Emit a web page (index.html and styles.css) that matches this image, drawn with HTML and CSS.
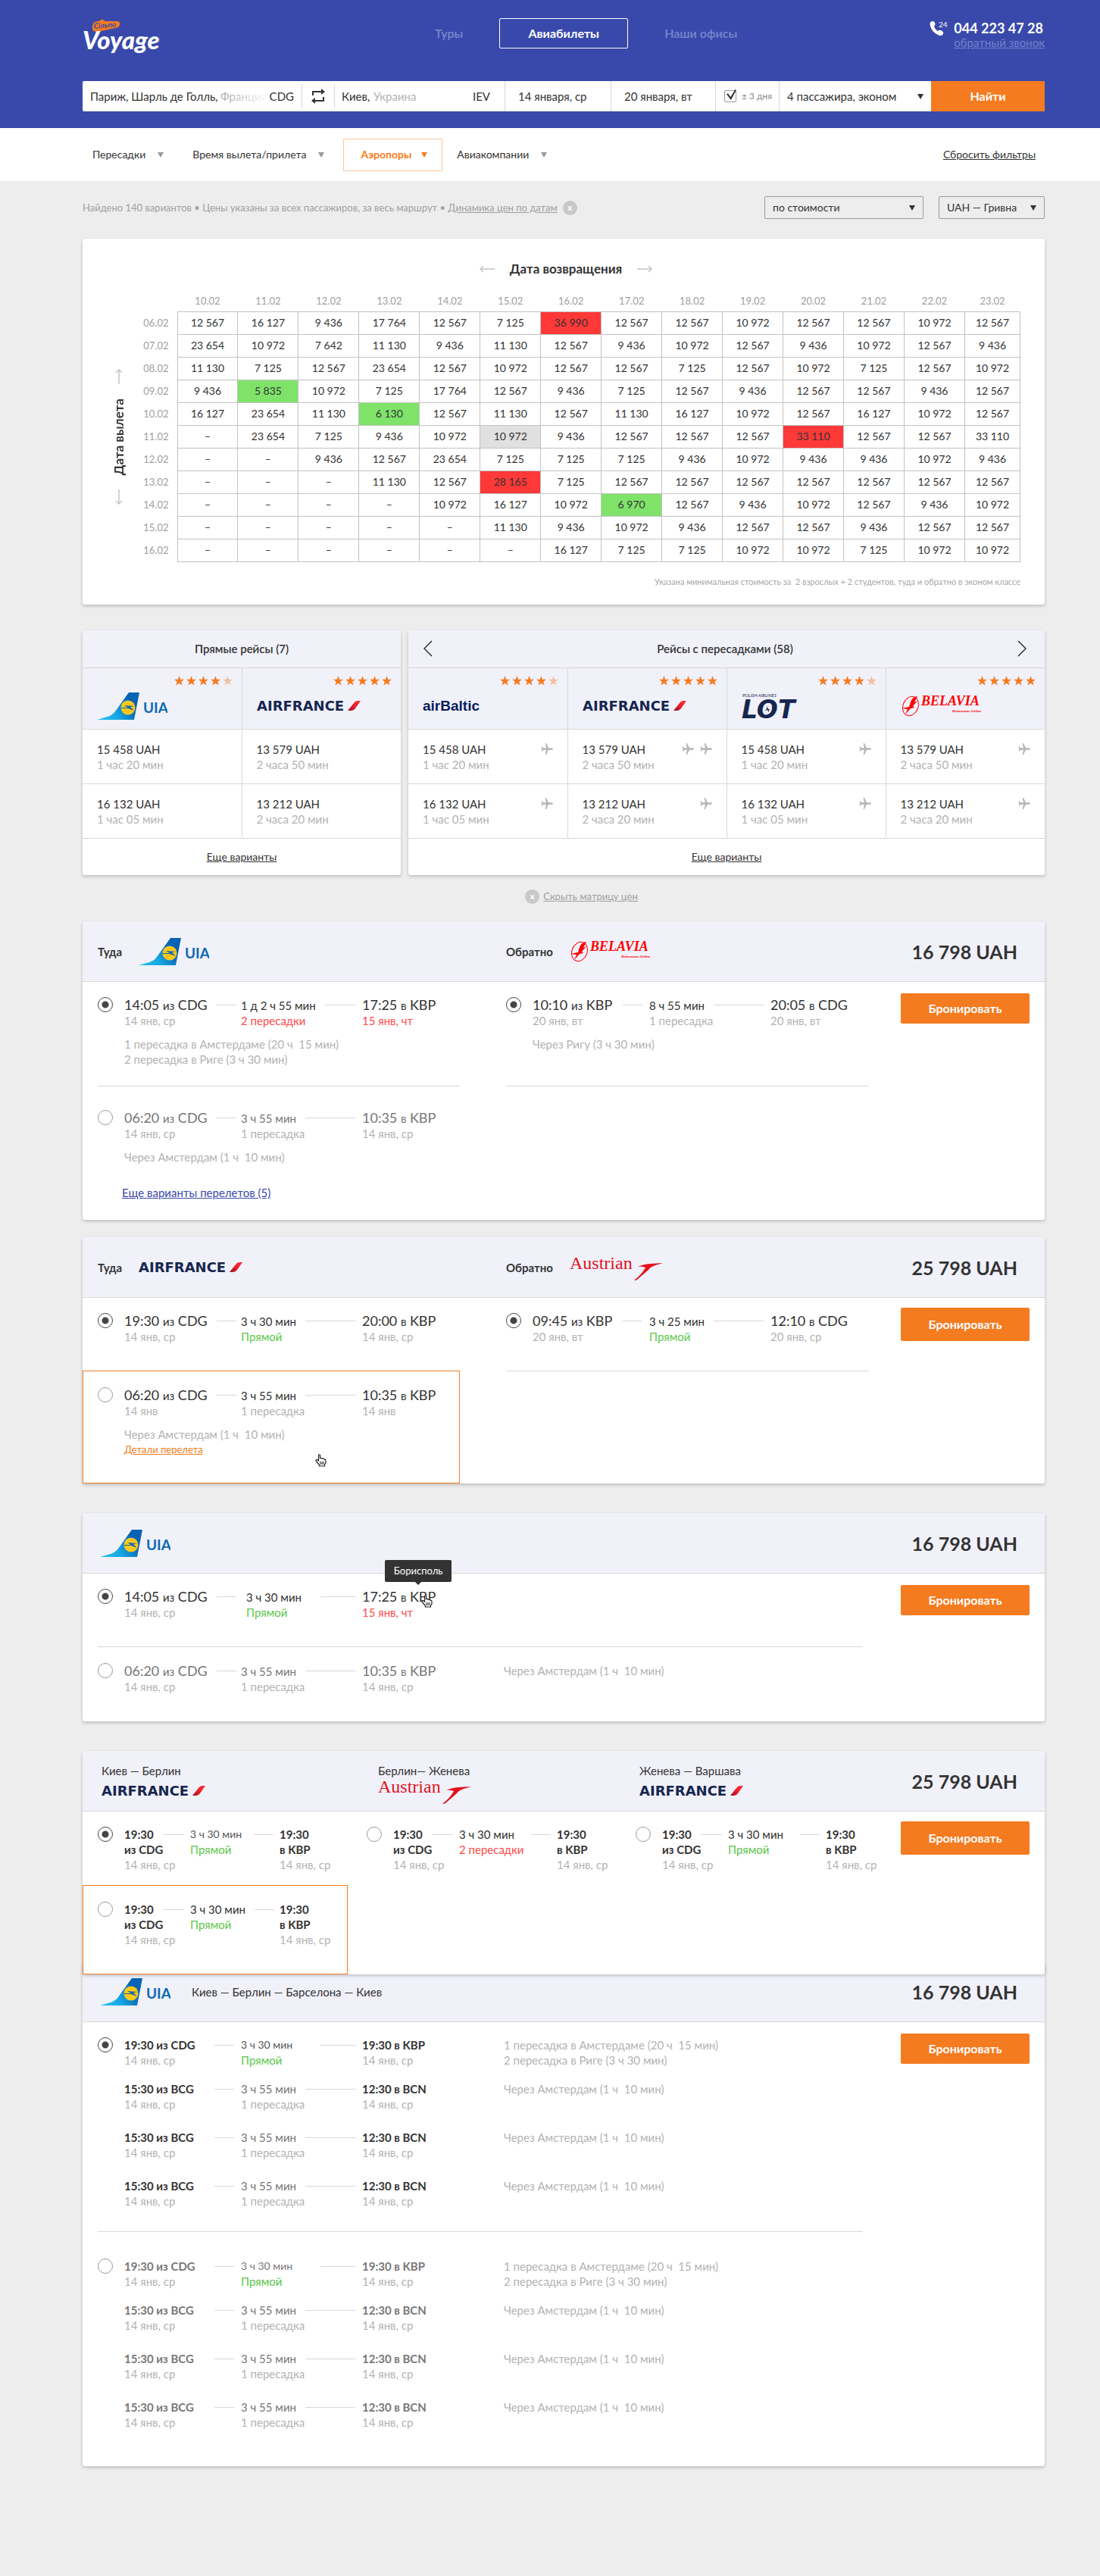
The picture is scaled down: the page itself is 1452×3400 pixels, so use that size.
FILE: index.html
```html
<!DOCTYPE html>
<html lang="ru">
<head>
<meta charset="utf-8">
<title>Voyage — Авиабилеты</title>
<meta name="viewport" content="width=device-width, initial-scale=1">
<link rel="stylesheet" href="styles.css">
</head>
<body>

<svg class="sprite" width="0" height="0" aria-hidden="true">
  <defs>
    <linearGradient id="tail" x1="0" y1="1" x2="1" y2="0.6">
      <stop offset="0" stop-color="#22c3f3"/><stop offset="0.45" stop-color="#18a8e4"/><stop offset="0.9" stop-color="#0863b4"/>
    </linearGradient>
    <linearGradient id="mark" x1="0" y1="1" x2="1" y2="0">
      <stop offset="0" stop-color="#8f1420"/><stop offset="0.5" stop-color="#ee2028"/><stop offset="1" stop-color="#f5333b"/>
    </linearGradient>
    <symbol id="uia" viewBox="0 0 93 36">
      <path d="M0 36C13 32 19 32 24 25L42 0H56L49 36Z" fill="url(#tail)"/>
      <circle cx="41" cy="20" r="9.500" fill="#fcc81a"/>
      <path d="M32 20h9l-5-3 14 1-6 1 5 5-8-3-9 0z" fill="#0a65b3"/>
      <text x="61" y="27" class="logo-uia">UIA</text>
    </symbol>
    <symbol id="airfrance" viewBox="0 0 137 14">
      <text x="0" y="13" class="logo-af">AIRFRANCE</text>
      <path d="M120 13L128 3Q130 0 133 0H137L130 10Q128 13 125 13Z" fill="url(#mark)"/>
    </symbol>
    <symbol id="airbaltic" viewBox="0 0 76 20">
      <text x="0" y="16" class="logo-bt">airBaltic</text>
    </symbol>
    <symbol id="lot" viewBox="0 0 76 34">
      <text x="1" y="5" class="logo-lot-sub">POLISH AIRLINES</text>
      <text x="0" y="33" class="logo-lot">LOT</text>
      <circle cx="34" cy="21" r="5.500" fill="#f1f1fa"/>
      <path d="M30 23l3-2 0-4 2 4 3 0-2 1 0 3-2-3z" fill="#16264f"/>
    </symbol>
    <symbol id="belavia" viewBox="0 0 106 28">
      <ellipse cx="13" cy="14" rx="10" ry="13" transform="rotate(22 13 14)" fill="none" stroke="#f00" stroke-width="1"/>
      <path d="M22 1C14 2 13 8 11 15L1 17l8 1-3 7 7-8 5-1-2-2 6-7-4 2z" fill="#f00"/>
      <text x="27" y="13" class="logo-bel">BELAVIA</text>
      <text x="68" y="22" class="logo-bel-sub">Belarusian Airlines</text>
    </symbol>
    <symbol id="austrian" viewBox="0 0 124 34">
      <text x="0" y="19" class="logo-os">Austrian</text>
      <path d="M90 16C100 11 112 12 123 11C114 14 107 15 104 20L89 33Q85 35 86 33C93 28 97 22 100 17Q95 15 90 16Z" fill="#e1131d"/>
    </symbol>
    <symbol id="star" viewBox="0 0 13 13">
      <path d="M6.500 0L8.200 4.700L13 4.800L9.200 7.800L10.600 12.600L6.500 9.800L2.400 12.600L3.800 7.800L0 4.800L4.800 4.700Z"/>
    </symbol>
    <symbol id="stars-5" viewBox="0 0 77 13">
      <g fill="#f57b20"><use href="#star" width="13" height="13"/><use href="#star" x="16" width="13" height="13"/><use href="#star" x="32" width="13" height="13"/><use href="#star" x="48" width="13" height="13"/><use href="#star" x="64" width="13" height="13"/></g>
    </symbol>
    <symbol id="stars-4" viewBox="0 0 77 13">
      <g fill="#f57b20"><use href="#star" width="13" height="13"/><use href="#star" x="16" width="13" height="13"/><use href="#star" x="32" width="13" height="13"/><use href="#star" x="48" width="13" height="13"/><use href="#star" x="64" width="13" height="13" opacity="0.4"/></g>
    </symbol>
    <symbol id="plane" viewBox="0 0 16 15">
      <path d="M16 7.500C16 8.400 15 8.700 14 8.700H10L7 15H5.600L6.900 8.700H3.200L1.800 10.500H.6L1.300 7.500.6 4.500H1.800L3.200 6.300H6.900L5.600 0H7L10 6.300H14C15 6.300 16 6.600 16 7.500Z" fill="#b5b5b5"/>
    </symbol>
    <symbol id="hand" viewBox="0 0 15 17">
      <path d="M4.500 1.500Q5.500 0 6.500 1.500V5.500Q8 5 8.500 6Q10 5.500 10.500 6.500Q12 6 12.500 7.500Q14 7 14 9V12L12.500 14V16H5.500V14.500L3 11.500L1 9Q1 7 2.500 7.500L4.500 9Z" fill="#fff" stroke="#222" stroke-width="1.200"/>
      <path d="M7 10v4M9 10v4M11 10v4" stroke="#222" stroke-width="1"/>
    </symbol>
    <symbol id="arrow-right" viewBox="0 0 20 10">
      <path d="M0 5H19M15 1L19 5L15 9" fill="none" stroke="#c4c4c4" stroke-width="1.500"/>
    </symbol>
    <symbol id="arrow-left" viewBox="0 0 20 10">
      <path d="M20 5H1M5 1L1 5L5 9" fill="none" stroke="#c4c4c4" stroke-width="1.500"/>
    </symbol>
  </defs>
</svg>

<header class="header">
  <div class="topbar">
    <a class="brand" href="#" aria-label="Voyage">
      <svg width="104" height="56" viewBox="0 0 104 56" aria-hidden="true">
        <path d="M13 10Q14 4 21 4L25 2Q28 1 29 4L45 4Q50 4 49 8Q49 12 43 13L20 18Q12 19 13 10Z" fill="#f57b20"/>
        <text x="15" y="14" class="brand-sub" transform="rotate(-5 15 14)">Сільпо</text>
        <text x="0" y="41" class="brand-name">Voyage</text>
      </svg>
    </a>
    <nav class="nav">
      <a class="nav-link" href="#">Туры</a>
      <a class="nav-link nav-link--active" href="#">Авиабилеты</a>
      <a class="nav-link" href="#">Наши офисы</a>
    </nav>
    <div class="contact">
      <svg width="26" height="20" viewBox="0 0 26 20" aria-hidden="true">
        <path d="M4 0Q7 0 7.500 4Q7 6 6 6.500Q7 10.500 11 13Q13 11 15 12Q19 14 18 17Q16 20 12 18.500Q2 14 0.500 4Q0.500 0 4 0Z" fill="#fff"/>
        <text x="12" y="8" class="contact-24">24</text>
      </svg>
      <div class="contact-text">
        <a class="contact-phone" href="tel:0442234728">044 223 47 28</a>
        <a class="contact-call" href="#">обратный звонок</a>
      </div>
    </div>
  </div>

  <form class="search">
    <div class="search-cell search-from">
      <input class="search-city" type="text" value="Париж, Шарль де Голль," aria-label="Откуда">
      <span class="search-country search-country--fade">Франция</span>
      <span class="search-code">CDG</span>
    </div>
    <button class="search-swap" type="button" aria-label="Поменять местами">
      <svg width="18" height="20" viewBox="0 0 18 20" aria-hidden="true"><path d="M2 9V4H15M16 11V16H3" fill="none" stroke="#333" stroke-width="2"/><path d="M13 0L18 4L13 8ZM5 12L0 16L5 20Z" fill="#333"/></svg>
    </button>
    <div class="search-cell search-to">
      <input class="search-city search-city--short" type="text" value="Киев," aria-label="Куда">
      <span class="search-country">Украина</span>
      <span class="search-code">IEV</span>
    </div>
    <input class="search-date" type="text" value="14 января, ср" aria-label="Дата вылета">
    <input class="search-date" type="text" value="20 января, вт" aria-label="Дата возвращения">
    <label class="search-flex"><input type="checkbox" class="check" checked> ± 3 дня</label>
    <div class="select search-pax">
      <select aria-label="Пассажиры"><option>4 пассажира, эконом</option></select>
    </div>
    <button class="search-go" type="submit">Найти</button>
  </form>
</header>

<div class="filters">
  <div class="filters-list">
    <button class="filter" type="button">Пересадки <i class="tri"></i></button>
    <button class="filter" type="button">Время вылета/прилета <i class="tri"></i></button>
    <button class="filter filter--active" type="button">Аэропоры <i class="tri"></i></button>
    <button class="filter" type="button">Авиакомпании <i class="tri"></i></button>
  </div>
  <a class="reset" href="#">Сбросить фильтры</a>
</div>

<main class="main">
  <div class="summary">
    <p class="summary-text">Найдено 140 вариантов • Цены указаны за всех пассажиров, за весь маршрут • <a href="#">Динамика цен по датам</a></p>
    <button class="close" type="button" aria-label="Закрыть">x</button>
    <div class="select select--box select--sort"><select aria-label="Сортировка"><option>по стоимости</option></select></div>
    <div class="select select--box select--currency"><select aria-label="Валюта"><option>UAH — Гривна</option></select></div>
  </div>

  <section class="card matrix">
    <h2 class="matrix-title">
      <svg width="20" height="10" aria-hidden="true"><use href="#arrow-left"/></svg>
      Дата возвращения
      <svg width="20" height="10" aria-hidden="true"><use href="#arrow-right"/></svg>
    </h2>
    <div class="matrix-body">
      <h3 class="matrix-side">
        <svg width="10" height="20" viewBox="0 0 10 20" aria-hidden="true"><path d="M5 20V1M1 5L5 1L9 5" fill="none" stroke="#c4c4c4" stroke-width="1.500"/></svg>
        <span>Дата вылета</span>
        <svg width="10" height="20" viewBox="0 0 10 20" aria-hidden="true"><path d="M5 0V19M1 15L5 19L9 15" fill="none" stroke="#c4c4c4" stroke-width="1.500"/></svg>
      </h3>
      <table class="prices">
        <colgroup><col class="col-date"><col span="13"><col class="col-last"></colgroup>
        <thead><tr><td></td><th>10.02</th><th>11.02</th><th>12.02</th><th>13.02</th><th>14.02</th><th>15.02</th><th>16.02</th><th>17.02</th><th>18.02</th><th>19.02</th><th>20.02</th><th>21.02</th><th>22.02</th><th>23.02</th></tr></thead>
        <tbody>
          <tr><th>06.02</th><td>12 567</td><td>16 127</td><td>9 436</td><td>17 764</td><td>12 567</td><td>7 125</td><td class="high">36 990</td><td>12 567</td><td>12 567</td><td>10 972</td><td>12 567</td><td>12 567</td><td>10 972</td><td>12 567</td></tr>
          <tr><th>07.02</th><td>23 654</td><td>10 972</td><td>7 642</td><td>11 130</td><td>9 436</td><td>11 130</td><td>12 567</td><td>9 436</td><td>10 972</td><td>12 567</td><td>9 436</td><td>10 972</td><td>12 567</td><td>9 436</td></tr>
          <tr><th>08.02</th><td>11 130</td><td>7 125</td><td>12 567</td><td>23 654</td><td>12 567</td><td>10 972</td><td>12 567</td><td>12 567</td><td>7 125</td><td>12 567</td><td>10 972</td><td>7 125</td><td>12 567</td><td>10 972</td></tr>
          <tr><th>09.02</th><td>9 436</td><td class="low">5 835</td><td>10 972</td><td>7 125</td><td>17 764</td><td>12 567</td><td>9 436</td><td>7 125</td><td>12 567</td><td>9 436</td><td>12 567</td><td>12 567</td><td>9 436</td><td>12 567</td></tr>
          <tr><th>10.02</th><td>16 127</td><td>23 654</td><td>11 130</td><td class="low">6 130</td><td>12 567</td><td>11 130</td><td>12 567</td><td>11 130</td><td>16 127</td><td>10 972</td><td>12 567</td><td>16 127</td><td>10 972</td><td>12 567</td></tr>
          <tr><th>11.02</th><td>–</td><td>23 654</td><td>7 125</td><td>9 436</td><td>10 972</td><td class="current">10 972</td><td>9 436</td><td>12 567</td><td>12 567</td><td>12 567</td><td class="high">33 110</td><td>12 567</td><td>12 567</td><td>33 110</td></tr>
          <tr><th>12.02</th><td>–</td><td>–</td><td>9 436</td><td>12 567</td><td>23 654</td><td>7 125</td><td>7 125</td><td>7 125</td><td>9 436</td><td>10 972</td><td>9 436</td><td>9 436</td><td>10 972</td><td>9 436</td></tr>
          <tr><th>13.02</th><td>–</td><td>–</td><td>–</td><td>11 130</td><td>12 567</td><td class="high">28 165</td><td>7 125</td><td>12 567</td><td>12 567</td><td>12 567</td><td>12 567</td><td>12 567</td><td>12 567</td><td>12 567</td></tr>
          <tr><th>14.02</th><td>–</td><td>–</td><td>–</td><td>–</td><td>10 972</td><td>16 127</td><td>10 972</td><td class="low">6 970</td><td>12 567</td><td>9 436</td><td>10 972</td><td>12 567</td><td>9 436</td><td>10 972</td></tr>
          <tr><th>15.02</th><td>–</td><td>–</td><td>–</td><td>–</td><td>–</td><td>11 130</td><td>9 436</td><td>10 972</td><td>9 436</td><td>12 567</td><td>12 567</td><td>9 436</td><td>12 567</td><td>12 567</td></tr>
          <tr><th>16.02</th><td>–</td><td>–</td><td>–</td><td>–</td><td>–</td><td>–</td><td>16 127</td><td>7 125</td><td>7 125</td><td>10 972</td><td>10 972</td><td>7 125</td><td>10 972</td><td>10 972</td></tr>
        </tbody>
      </table>
    </div>
    <p class="matrix-note">Указана минимальная стоимость за&nbsp; 2 взрослых + 2 студентов, туда и обратно в эконом классе</p>
  </section>

  <div class="airlines">
    <section class="card airlines-direct">
      <table class="offers">
        <thead>
          <tr class="offers-title"><th colspan="2">Прямые рейсы (7)</th></tr>
          <tr class="offers-logos">
            <th><div class="brandcell"><svg class="stars" width="77" height="13" role="img" aria-label="4 из 5"><use href="#stars-4"/></svg><span class="brandcell-logo"><svg width="93" height="36" role="img" aria-label="UIA"><use href="#uia"/></svg></span></div></th>
            <th><div class="brandcell"><svg class="stars" width="77" height="13" role="img" aria-label="5 из 5"><use href="#stars-5"/></svg><span class="brandcell-logo"><svg width="137" height="14" role="img" aria-label="Air France"><use href="#airfrance"/></svg></span></div></th>
          </tr>
        </thead>
        <tbody>
          <tr><td><div class="offer"><span>15 458 UAH</span></div><div class="offer-time">1 час 20 мин</div></td><td><div class="offer"><span>13 579 UAH</span></div><div class="offer-time">2 часа 50 мин</div></td></tr>
          <tr><td><div class="offer"><span>16 132 UAH</span></div><div class="offer-time">1 час 05 мин</div></td><td><div class="offer"><span>13 212 UAH</span></div><div class="offer-time">2 часа 20 мин</div></td></tr>
        </tbody>
      </table>
      <p class="offers-more"><a href="#">Еще варианты</a></p>
    </section>

    <section class="card airlines-stops">
      <table class="offers">
        <thead>
          <tr class="offers-title"><th colspan="4">
            <div class="pager">
              <button type="button" aria-label="Назад"><svg width="12" height="22" viewBox="0 0 12 22" aria-hidden="true"><path d="M11 1L1 11L11 21" fill="none" stroke="#333" stroke-width="1.500"/></svg></button>
              <span>Рейсы с пересадками (58)</span>
              <button type="button" aria-label="Вперед"><svg width="12" height="22" viewBox="0 0 12 22" aria-hidden="true"><path d="M1 1L11 11L1 21" fill="none" stroke="#333" stroke-width="1.500"/></svg></button>
            </div></th></tr>
          <tr class="offers-logos">
            <th><div class="brandcell"><svg class="stars" width="77" height="13" role="img" aria-label="4 из 5"><use href="#stars-4"/></svg><span class="brandcell-logo"><svg width="76" height="20" role="img" aria-label="airBaltic"><use href="#airbaltic"/></svg></span></div></th>
            <th><div class="brandcell"><svg class="stars" width="77" height="13" role="img" aria-label="5 из 5"><use href="#stars-5"/></svg><span class="brandcell-logo"><svg width="137" height="14" role="img" aria-label="Air France"><use href="#airfrance"/></svg></span></div></th>
            <th><div class="brandcell"><svg class="stars" width="77" height="13" role="img" aria-label="4 из 5"><use href="#stars-4"/></svg><span class="brandcell-logo"><svg width="76" height="34" role="img" aria-label="LOT"><use href="#lot"/></svg></span></div></th>
            <th><div class="brandcell"><svg class="stars" width="77" height="13" role="img" aria-label="5 из 5"><use href="#stars-5"/></svg><span class="brandcell-logo"><svg width="106" height="28" role="img" aria-label="Belavia"><use href="#belavia"/></svg></span></div></th>
          </tr>
        </thead>
        <tbody>
          <tr>
            <td><div class="offer"><span>15 458 UAH</span><svg width="16" height="15" aria-hidden="true"><use href="#plane"/></svg></div><div class="offer-time">1 час 20 мин</div></td>
            <td><div class="offer"><span>13 579 UAH</span><svg width="16" height="15" aria-hidden="true"><use href="#plane"/></svg><svg width="16" height="15" aria-hidden="true"><use href="#plane"/></svg></div><div class="offer-time">2 часа 50 мин</div></td>
            <td><div class="offer"><span>15 458 UAH</span><svg width="16" height="15" aria-hidden="true"><use href="#plane"/></svg></div><div class="offer-time">1 час 20 мин</div></td>
            <td><div class="offer"><span>13 579 UAH</span><svg width="16" height="15" aria-hidden="true"><use href="#plane"/></svg></div><div class="offer-time">2 часа 50 мин</div></td>
          </tr>
          <tr>
            <td><div class="offer"><span>16 132 UAH</span><svg width="16" height="15" aria-hidden="true"><use href="#plane"/></svg></div><div class="offer-time">1 час 05 мин</div></td>
            <td><div class="offer"><span>13 212 UAH</span><svg width="16" height="15" aria-hidden="true"><use href="#plane"/></svg></div><div class="offer-time">2 часа 20 мин</div></td>
            <td><div class="offer"><span>16 132 UAH</span><svg width="16" height="15" aria-hidden="true"><use href="#plane"/></svg></div><div class="offer-time">1 час 05 мин</div></td>
            <td><div class="offer"><span>13 212 UAH</span><svg width="16" height="15" aria-hidden="true"><use href="#plane"/></svg></div><div class="offer-time">2 часа 20 мин</div></td>
          </tr>
        </tbody>
      </table>
      <p class="offers-more"><a href="#">Еще варианты</a></p>
    </section>
  </div>

  <p class="hide-matrix"><button class="close" type="button" aria-label="Скрыть">x</button><a href="#">Скрыть матрицу цен</a></p>

  <!-- Туда и обратно, UIA + Belavia -->
  <article class="card trip">
    <header class="trip-head">
      <div class="trip-way">Туда <svg width="93" height="36" role="img" aria-label="UIA"><use href="#uia"/></svg></div>
      <div class="trip-way">Обратно <svg width="106" height="28" role="img" aria-label="Belavia"><use href="#belavia"/></svg></div>
      <div class="trip-price">16 798 UAH</div>
    </header>
    <div class="trip-body">
      <div class="trip-col">
        <div class="option">
          <label class="leg">
            <input type="radio" class="radio" name="a-out" checked>
            <span class="cell"><span class="cell-top"><span class="time">14:05 <small>из</small> CDG</span><i class="dash dash--first"></i></span><span class="date">14 янв, ср</span></span>
            <span class="cell"><span class="cell-top"><span class="dur">1 д 2 ч 55 мин</span><i class="dash"></i></span><span class="red">2 пересадки</span></span>
            <span class="cell"><span class="cell-top"><span class="time">17:25 <small>в</small> KBP</span></span><span class="red">15 янв, чт</span></span>
          </label>
          <p class="stops">1 пересадка в Амстердаме (20 ч&nbsp; 15 мин)<br>2 пересадка в Риге (3 ч 30 мин)</p>
        </div>
        <div class="option option--next option--muted">
          <label class="leg">
            <input type="radio" class="radio" name="a-out">
            <span class="cell"><span class="cell-top"><span class="time">06:20 <small>из</small> CDG</span><i class="dash dash--first"></i></span><span class="date">14 янв, ср</span></span>
            <span class="cell"><span class="cell-top"><span class="dur">3 ч 55 мин</span><i class="dash"></i></span><span class="date">1 пересадка</span></span>
            <span class="cell"><span class="cell-top"><span class="time">10:35 <small>в</small> KBP</span></span><span class="date">14 янв, ср</span></span>
          </label>
          <p class="stops">Через Амстердам (1 ч&nbsp; 10 мин)</p>
          <a class="more-flights" href="#">Еще варианты перелетов (5)</a>
        </div>
      </div>
      <div class="trip-col">
        <div class="option option--deep">
          <label class="leg">
            <input type="radio" class="radio" name="a-back" checked>
            <span class="cell"><span class="cell-top"><span class="time">10:10 <small>из</small> KBP</span><i class="dash dash--first"></i></span><span class="date">20 янв, вт</span></span>
            <span class="cell"><span class="cell-top"><span class="dur">8 ч 55 мин</span><i class="dash"></i></span><span class="date">1 пересадка</span></span>
            <span class="cell"><span class="cell-top"><span class="time">20:05 <small>в</small> CDG</span></span><span class="date">20 янв, вт</span></span>
          </label>
          <p class="stops">Через Ригу (3 ч 30 мин)</p>
        </div>
      </div>
      <div class="trip-book"><button class="book" type="button">Бронировать</button></div>
    </div>
  </article>

  <!-- Туда и обратно, Air France + Austrian -->
  <article class="card trip trip--near">
    <header class="trip-head">
      <div class="trip-way">Туда <svg width="137" height="14" role="img" aria-label="Air France"><use href="#airfrance"/></svg></div>
      <div class="trip-way">Обратно <svg width="124" height="34" role="img" aria-label="Austrian"><use href="#austrian"/></svg></div>
      <div class="trip-price">25 798 UAH</div>
    </header>
    <div class="trip-body">
      <div class="trip-col">
        <div class="option option--short option--open">
          <label class="leg">
            <input type="radio" class="radio" name="b-out" checked>
            <span class="cell"><span class="cell-top"><span class="time">19:30 <small>из</small> CDG</span><i class="dash dash--first"></i></span><span class="date">14 янв, ср</span></span>
            <span class="cell"><span class="cell-top"><span class="dur">3 ч 30 мин</span><i class="dash"></i></span><span class="green">Прямой</span></span>
            <span class="cell"><span class="cell-top"><span class="time">20:00 <small>в</small> KBP</span></span><span class="date">14 янв, ср</span></span>
          </label>
        </div>
        <div class="option option--hover">
          <label class="leg">
            <input type="radio" class="radio" name="b-out">
            <span class="cell"><span class="cell-top"><span class="time">06:20 <small>из</small> CDG</span><i class="dash dash--first"></i></span><span class="date">14 янв</span></span>
            <span class="cell"><span class="cell-top"><span class="dur">3 ч 55 мин</span><i class="dash"></i></span><span class="date">1 пересадка</span></span>
            <span class="cell"><span class="cell-top"><span class="time">10:35 <small>в</small> KBP</span></span><span class="date">14 янв</span></span>
          </label>
          <p class="stops">Через Амстердам (1 ч&nbsp; 10 мин)</p>
          <a class="details" href="#">Детали перелета</a>
          <svg class="pointer pointer--option" width="15" height="17" aria-hidden="true"><use href="#hand"/></svg>
        </div>
      </div>
      <div class="trip-col">
        <div class="option option--short">
          <label class="leg">
            <input type="radio" class="radio" name="b-back" checked>
            <span class="cell"><span class="cell-top"><span class="time">09:45 <small>из</small> KBP</span><i class="dash dash--first"></i></span><span class="date">20 янв, вт</span></span>
            <span class="cell"><span class="cell-top"><span class="dur">3 ч 25 мин</span><i class="dash"></i></span><span class="green">Прямой</span></span>
            <span class="cell"><span class="cell-top"><span class="time">12:10 <small>в</small> CDG</span></span><span class="date">20 янв, ср</span></span>
          </label>
        </div>
      </div>
      <div class="trip-book"><button class="book book--tall" type="button">Бронировать</button></div>
    </div>
  </article>

  <!-- В одну сторону -->
  <article class="card trip trip--wide">
    <header class="trip-head">
      <div class="trip-way trip-way--logo"><svg width="93" height="36" role="img" aria-label="UIA"><use href="#uia"/></svg></div>
      <div class="trip-price">16 798 UAH</div>
    </header>
    <div class="trip-body">
      <div class="trip-col">
        <div class="option option--short">
          <label class="leg leg--note">
            <input type="radio" class="radio" name="c-out" checked>
            <span class="cell"><span class="cell-top"><span class="time">14:05 <small>из</small> CDG</span><i class="dash dash--first"></i></span><span class="date">14 янв, ср</span></span>
            <span class="cell cell--shift"><span class="cell-top"><span class="dur">3 ч 30 мин</span><i class="dash dash--last"></i></span><span class="green">Прямой</span></span>
            <span class="cell"><span class="cell-top"><span class="time">17:25 <small>в</small> <span class="airport">KBP<span class="tooltip">Борисполь</span><svg class="pointer pointer--airport" width="15" height="17" aria-hidden="true"><use href="#hand"/></svg></span></span></span><span class="red">15 янв, чт</span></span>
          </label>
        </div>
        <div class="option option--second option--muted">
          <label class="leg leg--note">
            <input type="radio" class="radio" name="c-out">
            <span class="cell"><span class="cell-top"><span class="time">06:20 <small>из</small> CDG</span><i class="dash dash--first"></i></span><span class="date">14 янв, ср</span></span>
            <span class="cell"><span class="cell-top"><span class="dur">3 ч 55 мин</span><i class="dash"></i></span><span class="date">1 пересадка</span></span>
            <span class="cell"><span class="cell-top"><span class="time">10:35 <small>в</small> KBP</span></span><span class="date">14 янв, ср</span></span>
            <span class="note">Через Амстердам (1 ч&nbsp; 10 мин)</span>
          </label>
        </div>
      </div>
      <div class="trip-book"><button class="book" type="button">Бронировать</button></div>
    </div>
  </article>

  <!-- Три перелета -->
  <article class="card trip trip--triple">
    <header class="trip-head">
      <div class="trip-route">Киев — Берлин<svg width="137" height="14" role="img" aria-label="Air France"><use href="#airfrance"/></svg></div>
      <div class="trip-route">Берлин— Женева<svg width="124" height="34" role="img" aria-label="Austrian"><use href="#austrian"/></svg></div>
      <div class="trip-route">Женева — Варшава<svg width="137" height="14" role="img" aria-label="Air France"><use href="#airfrance"/></svg></div>
      <div class="trip-price">25 798 UAH</div>
    </header>
    <div class="trip-body">
      <div class="trip-col">
        <div class="option">
          <label class="leg leg--stack leg--tight">
            <input type="radio" class="radio" name="d-1" checked>
            <span class="cell"><span class="cell-top"><b>19:30</b><i class="dash dash--stack"></i></span><b>из CDG</b><span class="date">14 янв, ср</span></span>
            <span class="cell"><span class="cell-top"><span class="dur dur--light">3 ч 30 мин</span><i class="dash dash--first"></i></span><span class="green">Прямой</span></span>
            <span class="cell"><b>19:30</b><b>в KBP</b><span class="date">14 янв, ср</span></span>
          </label>
        </div>
        <div class="option option--hover">
          <label class="leg leg--stack leg--tight">
            <input type="radio" class="radio" name="d-1">
            <span class="cell"><span class="cell-top"><b>19:30</b><i class="dash dash--stack"></i></span><b>из CDG</b><span class="date">14 янв, ср</span></span>
            <span class="cell"><span class="cell-top"><span class="dur">3 ч 30 мин</span><i class="dash dash--first"></i></span><span class="green">Прямой</span></span>
            <span class="cell"><b>19:30</b><b>в KBP</b><span class="date">14 янв, ср</span></span>
          </label>
        </div>
      </div>
      <div class="trip-col">
        <div class="option">
          <label class="leg leg--stack">
            <input type="radio" class="radio" name="d-2">
            <span class="cell"><span class="cell-top"><b>19:30</b><i class="dash dash--stack"></i></span><b>из CDG</b><span class="date">14 янв, ср</span></span>
            <span class="cell"><span class="cell-top"><span class="dur">3 ч 30 мин</span><i class="dash dash--first"></i></span><span class="red">2 пересадки</span></span>
            <span class="cell"><b>19:30</b><b>в KBP</b><span class="date">14 янв, ср</span></span>
          </label>
        </div>
      </div>
      <div class="trip-col">
        <div class="option">
          <label class="leg leg--stack">
            <input type="radio" class="radio" name="d-3">
            <span class="cell"><span class="cell-top"><b>19:30</b><i class="dash dash--stack"></i></span><b>из CDG</b><span class="date">14 янв, ср</span></span>
            <span class="cell"><span class="cell-top"><span class="dur">3 ч 30 мин</span><i class="dash dash--first"></i></span><span class="green">Прямой</span></span>
            <span class="cell"><b>19:30</b><b>в KBP</b><span class="date">14 янв, ср</span></span>
          </label>
        </div>
      </div>
      <div class="trip-book"><button class="book book--tall" type="button">Бронировать</button></div>
    </div>
  </article>

  <!-- Сложный маршрут -->
  <article class="card trip trip--wide trip--tucked">
    <header class="trip-head">
      <div class="trip-way trip-way--logo"><svg width="93" height="36" role="img" aria-label="UIA"><use href="#uia"/></svg> <span class="trip-path">Киев — Берлин — Барселона — Киев</span></div>
      <div class="trip-price">16 798 UAH</div>
    </header>
    <div class="trip-body">
      <div class="trip-col">
        <div class="option option--multi">
          <label class="leg leg--note">
            <input type="radio" class="radio" name="e-1" checked>
            <span class="cell"><span class="cell-top"><b>19:30 из CDG</b><i class="dash dash--first"></i></span><span class="date">14 янв, ср</span></span>
            <span class="cell"><span class="cell-top"><span class="dur dur--light">3 ч 30 мин</span><i class="dash dash--last"></i></span><span class="green">Прямой</span></span>
            <span class="cell"><span class="cell-top"><b>19:30 в KBP</b></span><span class="date">14 янв, ср</span></span>
            <span class="note">1 пересадка в Амстердаме (20 ч&nbsp; 15 мин)<br>2 пересадка в Риге (3 ч 30 мин)</span>
          </label>
          <div class="leg leg--note">
            <span class="cell cell--indent"><span class="cell-top"><b>15:30 из BCG</b><i class="dash dash--first"></i></span><span class="date">14 янв, ср</span></span>
            <span class="cell"><span class="cell-top"><span class="dur dur--soft">3 ч 55 мин</span><i class="dash"></i></span><span class="date">1 пересадка</span></span>
            <span class="cell"><span class="cell-top"><b>12:30 в BCN</b></span><span class="date">14 янв, ср</span></span>
            <span class="note">Через Амстердам (1 ч&nbsp; 10 мин)</span>
          </div>
          <div class="leg leg--note">
            <span class="cell cell--indent"><span class="cell-top"><b>15:30 из BCG</b><i class="dash dash--first"></i></span><span class="date">14 янв, ср</span></span>
            <span class="cell"><span class="cell-top"><span class="dur dur--soft">3 ч 55 мин</span><i class="dash"></i></span><span class="date">1 пересадка</span></span>
            <span class="cell"><span class="cell-top"><b>12:30 в BCN</b></span><span class="date">14 янв, ср</span></span>
            <span class="note">Через Амстердам (1 ч&nbsp; 10 мин)</span>
          </div>
          <div class="leg leg--note">
            <span class="cell cell--indent"><span class="cell-top"><b>15:30 из BCG</b><i class="dash dash--first"></i></span><span class="date">14 янв, ср</span></span>
            <span class="cell"><span class="cell-top"><span class="dur dur--soft">3 ч 55 мин</span><i class="dash"></i></span><span class="date">1 пересадка</span></span>
            <span class="cell"><span class="cell-top"><b>12:30 в BCN</b></span><span class="date">14 янв, ср</span></span>
            <span class="note">Через Амстердам (1 ч&nbsp; 10 мин)</span>
          </div>
        </div>
        <div class="option option--multi option--muted">
          <label class="leg leg--note">
            <input type="radio" class="radio" name="e-1">
            <span class="cell"><span class="cell-top"><b>19:30 из CDG</b><i class="dash dash--first"></i></span><span class="date">14 янв, ср</span></span>
            <span class="cell"><span class="cell-top"><span class="dur dur--light">3 ч 30 мин</span><i class="dash dash--last"></i></span><span class="green">Прямой</span></span>
            <span class="cell"><span class="cell-top"><b>19:30 в KBP</b></span><span class="date">14 янв, ср</span></span>
            <span class="note">1 пересадка в Амстердаме (20 ч&nbsp; 15 мин)<br>2 пересадка в Риге (3 ч 30 мин)</span>
          </label>
          <div class="leg leg--note">
            <span class="cell cell--indent"><span class="cell-top"><b>15:30 из BCG</b><i class="dash dash--first"></i></span><span class="date">14 янв, ср</span></span>
            <span class="cell"><span class="cell-top"><span class="dur">3 ч 55 мин</span><i class="dash"></i></span><span class="date">1 пересадка</span></span>
            <span class="cell"><span class="cell-top"><b>12:30 в BCN</b></span><span class="date">14 янв, ср</span></span>
            <span class="note">Через Амстердам (1 ч&nbsp; 10 мин)</span>
          </div>
          <div class="leg leg--note">
            <span class="cell cell--indent"><span class="cell-top"><b>15:30 из BCG</b><i class="dash dash--first"></i></span><span class="date">14 янв, ср</span></span>
            <span class="cell"><span class="cell-top"><span class="dur">3 ч 55 мин</span><i class="dash"></i></span><span class="date">1 пересадка</span></span>
            <span class="cell"><span class="cell-top"><b>12:30 в BCN</b></span><span class="date">14 янв, ср</span></span>
            <span class="note">Через Амстердам (1 ч&nbsp; 10 мин)</span>
          </div>
          <div class="leg leg--note">
            <span class="cell cell--indent"><span class="cell-top"><b>15:30 из BCG</b><i class="dash dash--first"></i></span><span class="date">14 янв, ср</span></span>
            <span class="cell"><span class="cell-top"><span class="dur">3 ч 55 мин</span><i class="dash"></i></span><span class="date">1 пересадка</span></span>
            <span class="cell"><span class="cell-top"><b>12:30 в BCN</b></span><span class="date">14 янв, ср</span></span>
            <span class="note">Через Амстердам (1 ч&nbsp; 10 мин)</span>
          </div>
        </div>
      </div>
      <div class="trip-book"><button class="book" type="button">Бронировать</button></div>
    </div>
  </article>
</main>
</body>
</html>
```
FILE: styles.css
```css
:root {
  --blue: #3949ab;
  --orange: #f57b20;
  --ink: #333;
  --grey: #b3b3b3;
  --line: #d8d8d8;
  --tint: #f1f1fa;
  --left: 109px;
  --right: 73px;
}

* { box-sizing: border-box; }

body {
  margin: 0;
  min-height: 100vh;
  background: #ededed;
  color: var(--ink);
  font: 15px/20px Lato, "Noto Sans", sans-serif;
}

h2, h3, p { margin: 0; }
button, input, select { font: inherit; color: inherit; }
button { border: 0; padding: 0; background: none; }
svg { display: block; flex: none; }
.sprite { position: absolute; }

/* logo lettering */
.logo-uia { font: 700 19px Lato, sans-serif; fill: #0a6ab6; }
.logo-af { font: 700 18px "DejaVu Sans", sans-serif; fill: #16264f; }
.logo-bt { font: 700 19px "Liberation Sans", sans-serif; fill: #051c5c; }
.logo-lot { font: italic 700 33px "DejaVu Sans", sans-serif; fill: #16264f; }
.logo-lot-sub { font: italic 400 6px Lato, sans-serif; fill: #16264f; }
.logo-bel { font: italic 700 18px "Liberation Serif", serif; fill: #f00; }
.logo-bel-sub { font: italic 700 5px "Liberation Serif", serif; fill: #f00; }
.logo-os { font: 400 24px "Liberation Serif", serif; fill: #e1131d; }

/* header */
.header {
  padding: 24px var(--right) 22px var(--left);
  background: var(--blue);
}
.topbar {
  display: grid;
  grid-template-columns: 465px 1fr auto;
  align-items: start;
  height: 83px;
}
.brand { display: block; }
.brand-name { font: italic 900 33px Lato, sans-serif; fill: #fff; }
.brand-sub { font: italic 700 10px Lato, sans-serif; fill: var(--blue); }
.nav { display: flex; gap: 48px; line-height: 40px; font-size: 16px; font-weight: 600; }
.nav-link { color: #7c87cf; text-decoration: none; }
.nav-link--active {
  width: 170px;
  border: 1px solid #fff;
  border-radius: 2px;
  line-height: 38px;
  text-align: center;
  color: #fff;
  font-weight: 700;
}
.contact { display: flex; gap: 6px; padding-top: 4px; }
.contact-24 { font: 10px Lato, sans-serif; fill: #fff; }
.contact-text { display: grid; }
.contact-phone { color: #fff; font-size: 18px; line-height: 18px; font-weight: 700; text-decoration: none; }
.contact-call { color: #7480cc; font-size: 15px; }

.search {
  display: grid;
  grid-template-columns: minmax(0, 289fr) 44px minmax(0, 225fr) minmax(0, 140fr) minmax(0, 138fr) 84px minmax(0, 200fr) 150px;
  height: 40px;
  background: #fff;
  border-radius: 2px;
  overflow: hidden;
  font-size: 15px;
}
.search input, .search select { border: 0; background: none; outline: 0; padding: 0; min-width: 0; }
.search-cell { display: flex; align-items: center; }
.search-from { padding: 0 10px; }
.search-to { padding: 0 19px 0 9px; border-right: 1px solid var(--line); }
.search-city { width: 172px; }
.search-city--short { width: 42px; }
.search-country { flex: 1; overflow: hidden; color: var(--grey); }
.search-country--fade { mask-image: linear-gradient(to right, #000 20%, transparent); }
.search-swap {
  display: grid;
  place-items: center;
  margin: 4px 0;
  border: solid var(--line);
  border-width: 0 1px;
}
.search .search-date { width: 100%; padding: 0 17px; border-right: 1px solid var(--line); }
.search-flex {
  display: flex;
  align-items: center;
  gap: 7px;
  padding-left: 11px;
  border-right: 1px solid var(--line);
  font-size: 12px;
  color: #8a8a8a;
  white-space: nowrap;
}
.check {
  appearance: none;
  position: relative;
  width: 16px;
  height: 16px;
  margin: 0;
}
.search .check { border: 1px solid #999; border-radius: 2px; }
.check:checked::before {
  content: "";
  position: absolute;
  inset: -2px -1px 2px 2px;
  background: #333;
  clip-path: polygon(0 45%, 15% 38%, 42% 72%, 88% 0, 100% 5%, 45% 100%);
}
.select { display: grid; align-items: center; }
.select > select { grid-area: 1 / 1; appearance: none; width: 100%; height: 100%; border: 0; background: none; padding: 0 30px 0 10px; }
.select::after {
  content: "";
  grid-area: 1 / 1;
  justify-self: end;
  margin-right: 10px;
  border: solid transparent;
  border-width: 7px 4px 0;
  border-top-color: #333;
  pointer-events: none;
}
.search .search-pax select { padding: 0 24px 0 10px; }
.search-go { background: var(--orange); color: #fff; font-size: 16px; font-weight: 700; }

/* filters */
.filters {
  display: flex;
  justify-content: space-between;
  align-items: center;
  height: 70px;
  padding: 0 85px 0 var(--left);
  background: #fff;
}
.filters-list { display: flex; gap: 12px; }
.filter {
  display: flex;
  align-items: center;
  gap: 16px;
  height: 43px;
  padding: 0 13px;
  font-size: 14px;
}
.filter--active { padding: 0 19px 0 22px; border: 1px solid #f9c69b; color: var(--orange); font-weight: 700; gap: 13px; }
.tri { border: solid transparent; border-width: 7px 4px 0; border-top-color: #999; }
.filter--active .tri { border-top-color: var(--orange); }
.filter--active + .filter { padding-left: 7px; }
.reset { color: var(--ink); font-size: 14px; }

/* results */
.main { padding: 20px var(--right) 144px var(--left); }
.summary { display: flex; align-items: center; height: 30px; margin-bottom: 26px; color: #a0a0a0; }
.summary-text { font-size: 13px; }
.summary a, .hide-matrix a { color: inherit; }
.close {
  width: 19px;
  height: 19px;
  margin-left: 7px;
  border-radius: 50%;
  background: #c8c8c8;
  color: #fff;
  font-size: 12px;
  line-height: 18px;
  font-weight: 700;
}
.select--box { height: 30px; border: 1px solid #999; border-radius: 2px; color: var(--ink); font-size: 14px; }
.select--sort { width: 210px; margin: 0 20px 0 auto; }
.select--currency { width: 140px; }

.card { background: #fff; border-radius: 3px; box-shadow: 0 2px 4px rgba(0, 0, 0, .2); }

.matrix { padding: 30px 32px 20px 38px; }
.matrix-title { display: flex; justify-content: center; align-items: center; gap: 20px; margin-bottom: 18px; font-size: 17px; line-height: 20px; font-weight: 700; }
.matrix-body { display: flex; }
.matrix-side {
  display: flex;
  flex-direction: column;
  align-items: center;
  justify-content: center;
  gap: 19px;
  width: 20px;
  padding-top: 28px;
  font-size: 17px;
  font-weight: 700;
}
.matrix-side span { writing-mode: vertical-rl; transform: rotate(180deg); }
.prices { flex: 1; width: 100%; border-collapse: collapse; table-layout: fixed; text-align: center; font-size: 14px; line-height: 18px; }
.prices .col-date { width: 67px; }
.prices .col-last { width: 73px; }
.prices th { padding: 0; color: #a0a0a0; font-weight: 400; font-size: 13px; }
.prices thead tr { height: 28px; }
.prices tbody tr { height: 30px; }
.prices tbody th { padding-right: 11px; text-align: right; }
.prices tbody td { padding: 0; border: 1px solid #c2c2c2; }
.prices .high { background: #ff3838; }
.prices .low { background: #7fe36a; }
.prices .current { background: #e0e0e0; }
.matrix-note { margin-top: 16px; text-align: right; font-size: 11px; color: #a8a8a8; }

.airlines { display: flex; gap: 10px; margin-top: 34px; }
.airlines-direct { flex: 1 1 0; }
.airlines-stops { flex: 2 1 0; }
.offers { width: 100%; border-collapse: collapse; table-layout: fixed; text-align: left; }
.offers th, .offers td { padding: 0; border: 1px solid var(--line); border-width: 0 1px 1px 0; }
.offers tr > :last-child { border-right: 0; }
.offers th { background: var(--tint); font-weight: 600; text-align: center; }
.offers-title { height: 50px; font-size: 15px; }
.pager { display: flex; justify-content: space-between; align-items: center; padding: 0 24px 0 20px; }
.pager button { display: block; }
.brandcell { display: flex; flex-direction: column; height: 80px; padding: 10px 12px 0 19px; }
.stars { align-self: flex-end; }
.brandcell-logo { display: flex; align-items: center; height: 54px; }
.offers td { height: 72px; padding: 0 19px 0 19px; }
.offer { display: flex; align-items: center; gap: 8px; font-size: 15px; }
.offer span { flex: 1; }
.offer-time { color: var(--grey); }
.offers-more { padding: 14px 15px; text-align: center; font-size: 14px; }
.offers-more a { color: var(--ink); }

.hide-matrix { display: flex; justify-content: center; align-items: center; gap: 5px; height: 20px; margin: 18px 0 23px; padding-left: 40px; font-size: 13px; color: #a0a0a0; }

/* trips */
.trip { display: grid; margin-top: 39px; }
.hide-matrix + .trip { margin-top: 0; }
.trip--near { margin-top: 23px; }
.trip-head, .trip-body { display: grid; grid-template-columns: 1fr 1fr 232px; }
.trip-head {
  align-items: center;
  height: 80px;
  border-bottom: 1px solid var(--line);
  border-radius: 3px 3px 0 0;
  background: var(--tint);
}
.trip-way { display: flex; align-items: center; gap: 22px; padding-left: 20px; font-weight: 700; }
.trip-way + .trip-way { padding-left: 40px; }
.trip-way--logo { padding-left: 23px; }
.trip-path { padding-left: 6px; font-weight: 400; }
.trip-price { padding-right: 36px; text-align: right; font-size: 25px; line-height: 30px; font-weight: 700; white-space: nowrap; }

.trip-col { padding: 0 20px; }
.trip-col + .trip-col { padding: 0 0 0 40px; }
.trip-book { padding: 15px 20px 0 42px; }
.book { display: block; width: 100%; height: 40px; border-radius: 2px; background: var(--orange); color: #fff; font-size: 16px; font-weight: 700; }
.book--tall { height: 44px; }
.trip-book:has(.book--tall) { padding-top: 13px; }

.option { padding: 20px 0 25px; border-bottom: 1px solid var(--line); }
.option--deep { padding-bottom: 45px; }
.option--short { padding-bottom: 35px; }
.option--next { padding: 31px 0 26px; border: 0; }
.option--second { padding: 21px 0 36px; border: 0; }
.option--open { border: 0; }
.option--hover {
  position: relative;
  margin: 0 1px 0 -20px;
  padding: 21px 0 34px 19px;
  border: 1px solid var(--orange);
}
.leg { display: grid; grid-template-columns: 35px 154px 160px 1fr; white-space: nowrap; }
.leg--note { grid-template-columns: 35px 154px 160px 187px 1fr; }
.radio {
  appearance: none;
  width: 20px;
  height: 20px;
  margin: 0;
  border: 1px solid #999;
  border-radius: 50%;
  background: #fff;
}
.radio:checked { border-color: #444; background: radial-gradient(circle, #444 4px, #fff 5px); }
.cell { display: flex; flex-direction: column; padding-right: 9px; }
.cell--indent { grid-column: 2; }
.cell--shift { padding-left: 7px; }
.cell-top { display: flex; align-items: center; gap: 12px; height: 21px; }
.time { font-size: 18px; line-height: 21px; }
.time small { font-size: 15px; }
.dur { font-size: 15px; }
.dur--light { font-size: 14px; color: #555; }
.dur--soft { color: #777; }
.dash { flex: 1; height: 1px; background: var(--line); }
.dash--first, .dash--last, .dash--stack { flex: none; width: 26px; margin-left: auto; }
.dash--last { width: 46px; }
.dash--stack { width: 28px; }
.date, .note, .stops { color: var(--grey); }
.red { color: #ff4b4b; }
.green { color: #5cc74a; }
b { font-weight: 700; }
.stops { margin: 11px 0 0 35px; }
.option--muted .time, .option--muted .dur, .option--muted b { color: #777; }
.more-flights { display: block; width: fit-content; margin: 27px 0 0 32px; color: var(--blue); }
.details { display: block; width: fit-content; margin-left: 35px; color: var(--orange); font-size: 13px; }

.pointer { position: absolute; }
.pointer--option { left: 306px; top: 109px; }
.airport { position: relative; }
.pointer--airport { left: 15px; top: 9px; }
.tooltip {
  position: absolute;
  left: 50%;
  bottom: 30px;
  width: 88px;
  margin-left: -50px;
  border-radius: 2px;
  background: #333;
  color: #fff;
  font-size: 13px;
  line-height: 29px;
  text-align: center;
}
.tooltip::after {
  content: "";
  position: absolute;
  left: 50%;
  top: 100%;
  margin-left: -4px;
  border: solid transparent;
  border-width: 4px 4px 0;
  border-top-color: #333;
}

.trip--wide .trip-head, .trip--wide .trip-body { grid-template-columns: 1fr 232px; }
.trip--wide .trip-col { padding-right: 8px; }

.trip--triple { position: relative; z-index: 1; }
.trip--triple .trip-head { grid-template-columns: 365fr 345fr 355fr 205fr; }
.trip--triple .trip-body { grid-template-columns: 1fr 1fr 1fr 205px; }
.trip--triple .trip-book { padding-left: 15px; }
.trip--triple .trip-col { padding: 0 5px 0 20px; }
.trip--triple .option { border: 0; padding: 20px 0 17px; }
.trip--triple .option--hover { margin: 0 0 0 -20px; padding: 21px 0 35px 19px; border: 1px solid var(--orange); }
.trip-route { display: grid; height: 80px; grid-template-rows: 20px 34px; align-items: center; padding: 16px 0 0 25px; }
.leg--stack { grid-template-columns: 35px 87px 129px 1fr; }
.leg--tight { grid-template-columns: 35px 87px 118px 1fr; }
.leg--stack .cell { padding-right: 8px; }
.leg--stack .cell-top, .option--multi .cell-top { height: 20px; }

.trip--tucked { margin-top: -17px; }
.option--multi { display: grid; row-gap: 24px; padding-bottom: 30px; }
.option--multi + .option--multi { padding: 35px 0 48px; border: 0; }
.option--multi .leg:nth-child(2) { margin-top: -6px; }
```
